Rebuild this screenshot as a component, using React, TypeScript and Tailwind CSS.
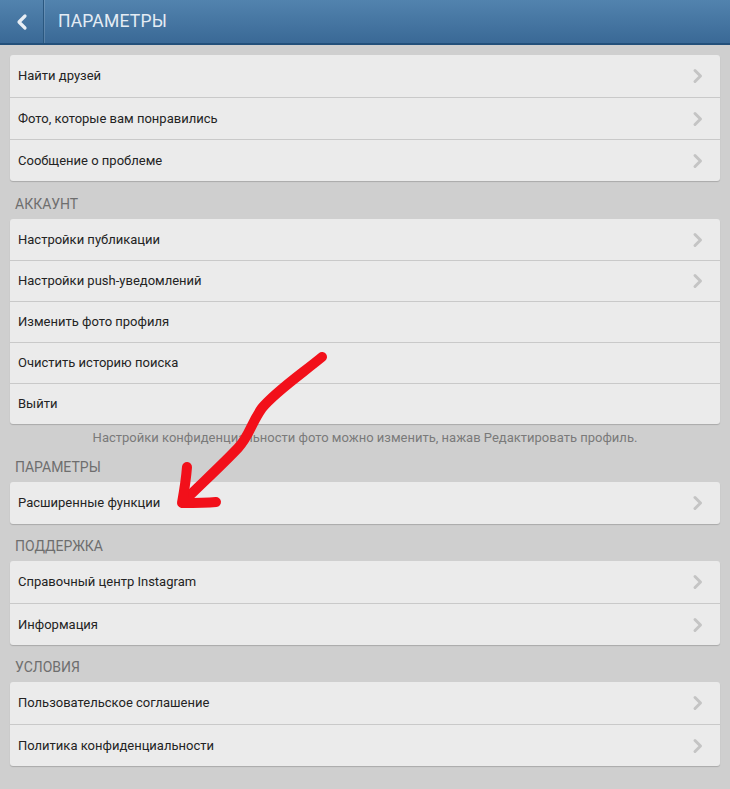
import React from 'react';

type Row = { label: string; chevron?: boolean };

const Chevron = () => (
  <svg width="12" height="16" viewBox="0 0 12 16" className="shrink-0">
    <path d="M3 2.5 L8.5 8 L3 13.5" fill="none" stroke="#c4c4c4" strokeWidth="3" strokeLinecap="round" strokeLinejoin="round" />
  </svg>
);

function Card({ rows, rowH = 'h-[42px]' }: { rows: Row[]; rowH?: string }) {
  return (
    <div className="bg-[#ebebeb] rounded-[3px] shadow-[0_1px_1px_rgba(0,0,0,0.18)]">
      {rows.map((r, i) => (
        <div
          key={r.label}
          className={`${rowH} flex items-center justify-between pl-[8px] pr-[16px] ${i > 0 ? 'border-t border-[#c9c9c9]' : ''}`}
        >
          <span className="text-[13px] text-[#232323]">{r.label}</span>
          {r.chevron !== false && <Chevron />}
        </div>
      ))}
    </div>
  );
}

function SectionLabel({ title, h = 'h-[37px]' }: { title: string; h?: string }) {
  return (
    <div className={`${h} flex items-end pb-[7px] pl-[5px]`}>
      <span className="text-[14px] leading-[16px] text-[#6e6e6e]">{title}</span>
    </div>
  );
}

export default function App() {
  return (
    <div
      className="relative w-[730px] h-[789px] overflow-hidden bg-[#cfcfcf]"
      style={{ fontFamily: 'Roboto, "Noto Sans", sans-serif' }}
    >
      {/* Action bar */}
      <div className="h-[45px] flex bg-gradient-to-b from-[#5283ae] to-[#3a6996] border-b-2 border-[#23507a]">
        <div className="w-[44px] flex items-center justify-center border-r border-[#2a577f] shadow-[1px_0_0_rgba(255,255,255,0.15)]">
          <svg width="14" height="18" viewBox="0 0 14 18">
            <path d="M10 3 L4 9 L10 15" fill="none" stroke="#e8eef5" strokeWidth="3.2" strokeLinecap="round" strokeLinejoin="round" />
          </svg>
        </div>
        <div className="flex items-center pl-[14px]">
          <span className="text-[17.5px] text-[#e4ecf4] tracking-[0.2px]">ПАРАМЕТРЫ</span>
        </div>
      </div>

      <div className="px-[10px] pt-[10px]">
        <Card
          rows={[
            { label: 'Найти друзей' },
            { label: 'Фото, которые вам понравились' },
            { label: 'Сообщение о проблеме' },
          ]}
        />

        <SectionLabel title="АККАУНТ" h="h-[38px]" />
        <Card
          rowH="h-[41px]"
          rows={[
            { label: 'Настройки публикации' },
            { label: 'Настройки push-уведомлений' },
            { label: 'Изменить фото профиля', chevron: false },
            { label: 'Очистить историю поиска', chevron: false },
            { label: 'Выйти', chevron: false },
          ]}
        />
        <div className="h-[27px] flex items-center justify-center">
          <span className="text-[13px] text-[#7a7a7a]">
            Настройки конфиденциальности фото можно изменить, нажав Редактировать профиль.
          </span>
        </div>

        <SectionLabel title="ПАРАМЕТРЫ" h="h-[31px]" />
        <Card rows={[{ label: 'Расширенные функции' }]} />

        <SectionLabel title="ПОДДЕРЖКА" />
        <Card
          rows={[
            { label: 'Справочный центр Instagram' },
            { label: 'Информация' },
          ]}
        />

        <SectionLabel title="УСЛОВИЯ" />
        <Card
          rows={[
            { label: 'Пользовательское соглашение' },
            { label: 'Политика конфиденциальности' },
          ]}
        />
      </div>

      {/* Red hand-drawn arrow */}
      <svg className="absolute left-0 top-0 pointer-events-none" width="730" height="789" viewBox="0 0 730 789">
        <path
          d="M322 357 C 300 375, 275 392, 262 408 C 250 425, 250 435, 238 448 C 222 465, 200 485, 183 502"
          fill="none"
          stroke="#f2101a"
          strokeWidth="10"
          strokeLinecap="round"
          strokeLinejoin="round"
        />
        <path
          d="M187 467 C 186 480, 184 492, 182 503 C 194 503, 205 503, 216 502"
          fill="none"
          stroke="#f2101a"
          strokeWidth="10"
          strokeLinecap="round"
          strokeLinejoin="round"
        />
      </svg>
    </div>
  );
}
